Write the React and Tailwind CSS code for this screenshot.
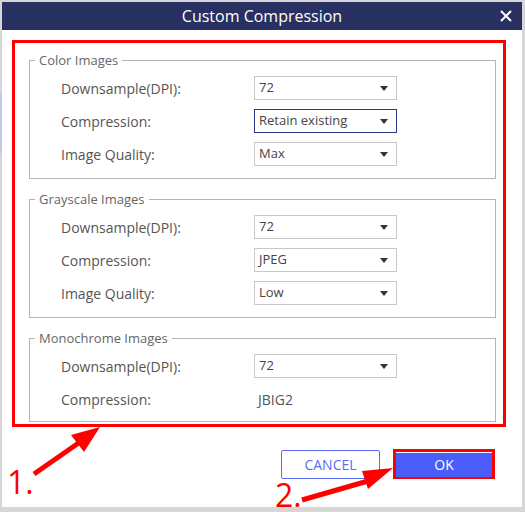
import React from "react";

const font = { fontFamily: '"Open Sans", "Noto Sans", sans-serif' };

const Select = ({ value, focused }) => (
  <div
    className={`flex items-center justify-between h-[24px] w-[143px] pl-[4px] pr-[8px] bg-white border text-[13px] text-[#444] ${
      focused ? "border-[#2b3488]" : "border-[#c8c8c8]"
    }`}
  >
    <span>{value}</span>
    {/* caret */}
    <span className="w-0 h-0 border-l-[4px] border-r-[4px] border-t-[5px] border-l-transparent border-r-transparent border-t-[#333]" />
  </div>
);

const Row = ({ label, children }) => (
  <div className="flex items-center h-[24px]">
    <div className="w-[193px] text-[14px] text-[#555]">{label}</div>
    {children}
  </div>
);

const Group = ({ title, children, className = "", bottom = "pb-[12px]" }) => (
  <fieldset className={`border border-[#b4b4b4] ${className}`}>
    <legend className="ml-[5px] px-[4px] text-[13px] leading-[20px] text-[#666]">
      {title}
    </legend>
    <div className={`flex flex-col gap-[9px] pl-[31px] pt-[6px] ${bottom}`}>
      {children}
    </div>
  </fieldset>
);

export default function App() {
  return (
    <div
      className="relative flex w-[525px] h-[512px] overflow-hidden bg-[#d6d6d6]"
      style={font}
    >
      {/* background app peeking at left */}
      <div className="w-[2px] pt-[93px]">
        <div className="h-[60px] bg-[#c2c7e6]" />
      </div>

      {/* Dialog */}
      <div className="mt-[2px] w-[520px] h-[505px] bg-white flex flex-col">
        {/* Title bar */}
        <div className="flex items-center h-[28px] bg-[#282f61] text-white">
          <div className="w-[34px]" />
          <div className="flex-1 text-center text-[16px]">Custom Compression</div>
          <div className="w-[34px] flex justify-end pr-[10px]">
            <svg width="12" height="12" viewBox="0 0 12 12">
              <path d="M1 1 L11 11 M11 1 L1 11" stroke="#fff" strokeWidth="2" />
            </svg>
          </div>
        </div>

        {/* Body */}
        <div className="pl-[10px] pt-[10px]">
          <div className="w-[494px] border-[3px] border-[#ff0000] pt-[7px] pl-[14px] pr-[7px] pb-[2px]">
            <Group title="Color Images">
              <Row label="Downsample(DPI):">
                <Select value="72" />
              </Row>
              <Row label="Compression:">
                <Select value="Retain existing" focused />
              </Row>
              <Row label="Image Quality:">
                <Select value="Max" />
              </Row>
            </Group>

            <Group title="Grayscale Images" className="mt-[10px]">
              <Row label="Downsample(DPI):">
                <Select value="72" />
              </Row>
              <Row label="Compression:">
                <Select value="JPEG" />
              </Row>
              <Row label="Image Quality:">
                <Select value="Low" />
              </Row>
            </Group>

            <Group title="Monochrome Images" className="mt-[10px]" bottom="pb-[10px]">
              <Row label="Downsample(DPI):">
                <Select value="72" />
              </Row>
              <Row label="Compression:">
                <span className="pl-[4px] text-[14px] text-[#555]">JBIG2</span>
              </Row>
            </Group>
          </div>
        </div>

        {/* Buttons */}
        <div className="flex items-center justify-end gap-[13px] mt-[22px] pr-[27px]">
          <button className="w-[99px] h-[29px] rounded-[2px] border border-[#5b6cf4] bg-white text-[14px] text-[#5b6cf4]">
            CANCEL
          </button>
          <div className="w-[102px] h-[30px] border-[3px] border-[#ff0000]">
            <button className="w-full h-full bg-[#4a5cfa] text-[14px] text-white">
              OK
            </button>
          </div>
        </div>
      </div>

      {/* Annotations */}
      <svg
        className="absolute inset-0 pointer-events-none"
        width="525"
        height="512"
        viewBox="0 0 525 512"
      >
        <line x1="34" y1="474" x2="80" y2="442" stroke="#ff0000" strokeWidth="5" />
        <polygon points="100,427 71,435 84,452" fill="#ff0000" />
        <line x1="302" y1="500" x2="368" y2="481" stroke="#ff0000" strokeWidth="5" />
        <polygon points="393,468 362,471 368,489" fill="#ff0000" />
      </svg>
      <span className="absolute left-[7px] top-[466px] text-[32px] leading-[32px] text-[#ff0000]">
        1.
      </span>
      <span className="absolute left-[275px] top-[479px] text-[32px] leading-[32px] text-[#ff0000]">
        2.
      </span>
    </div>
  );
}
